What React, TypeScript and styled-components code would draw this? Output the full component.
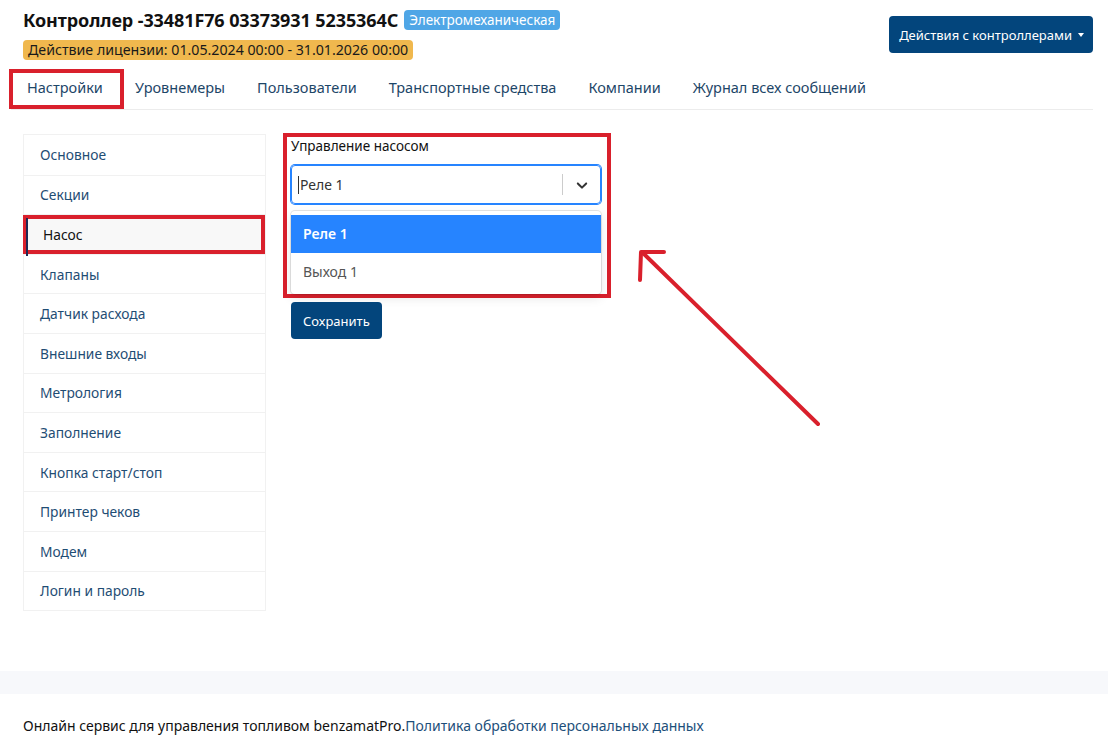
import React from 'react'
import styled, { createGlobalStyle, css } from 'styled-components'

const GlobalStyle = createGlobalStyle`
  * { box-sizing: border-box; }
  body {
    margin: 0;
    font-family: "Noto Sans", "Open Sans", sans-serif;
    color: #212529;
    background: #fff;
  }
`

const RED = '#d9202c'
const NAVY = '#03457c'

const marked = css`
  box-shadow: inset 0 0 0 4px ${RED};
`

const Page = styled.div`
  position: relative;
  width: 1108px;
  min-height: 747px;
`
const Main = styled.div`
  padding: 8px 15px 0 23px;
`
const Header = styled.div`
  display: flex;
  justify-content: space-between;
  align-items: flex-start;
`
const TitleBlock = styled.div`
  display: flex;
  flex-direction: column;
  align-items: flex-start;
  gap: 8px;
`
const TitleRow = styled.div`
  display: flex;
  align-items: center;
  gap: 6px;
`
const Title = styled.h1`
  margin: 0;
  font-size: 18px;
  font-weight: 700;
  letter-spacing: -0.1px;
  color: #111;
  line-height: 24px;
`
const Badge = styled.span<{ $bg: string; $fg: string; $size: number }>`
  display: inline-block;
  background: ${(p) => p.$bg};
  color: ${(p) => p.$fg};
  font-size: ${(p) => p.$size}px;
  line-height: 20px;
  padding: 0 5px;
  border-radius: 4px;
  white-space: nowrap;
`
const ActionsButton = styled.button`
  margin-top: 8px;
  display: flex;
  align-items: center;
  gap: 4px;
  height: 37px;
  padding: 0 9px 0 10px;
  background: ${NAVY};
  color: #fff;
  border: none;
  border-radius: 4px;
  font-family: inherit;
  font-size: 13px;
  font-weight: 400;
  &::after {
    content: '';
    border-top: 4px solid #fff;
    border-left: 3.5px solid transparent;
    border-right: 3.5px solid transparent;
    margin-left: 2px;
  }
`
const Tabs = styled.nav`
  display: flex;
  margin: 9px 0 0 -12px;
  border-bottom: 1px solid #ececec;
`
const Tab = styled.div<{ $marked?: boolean }>`
  position: relative;
  height: 40px;
  display: flex;
  align-items: center;
  padding: 0 16px 4px;
  font-size: 14.5px;
  color: #1d4668;
  ${(p) =>
    p.$marked &&
    css`
      &::after {
        content: '';
        position: absolute;
        left: -2px;
        right: -5px;
        top: 0;
        bottom: 0;
        border: 4px solid ${RED};
      }
    `}
`
const Body = styled.div`
  display: flex;
  align-items: flex-start;
  gap: 17px;
  margin-top: 24px;
`
const SideNav = styled.ul`
  list-style: none;
  margin: 0;
  padding: 0;
  width: 243px;
  border: 1px solid #f1f1f1;
`
const NavItem = styled.li<{ $active?: boolean }>`
  height: 39.6px;
  display: flex;
  align-items: center;
  padding-left: 16px;
  font-size: 13.8px;
  color: #1f4d74;
  border-top: 1px solid #f1f1f1;
  &:first-child { border-top: none; }
  ${(p) =>
    p.$active &&
    css`
      position: relative;
      margin-left: -1px;
      padding-left: 20px;
      background: #f8f8f8;
      color: #111;
      ${marked};
      &::before {
        content: '';
        position: absolute;
        left: 3px;
        top: 3px;
        bottom: -2px;
        width: 2px;
        background: #1d2a55;
      }
    `}
`
const Content = styled.div`
  display: flex;
  flex-direction: column;
  align-items: flex-start;
  gap: 4px;
  margin-top: -1px;
`
const MarkedBox = styled.div`
  width: 328px;
  padding: 5px 10px 4px 8px;
  ${marked};
`
const Label = styled.div`
  font-size: 13.5px;
  color: #111;
  line-height: 17px;
  margin-bottom: 10px;
`
const Control = styled.div`
  height: 39px;
  display: flex;
  align-items: center;
  border: 1px solid #2684ff;
  box-shadow: 0 0 0 1px #2684ff;
  border-radius: 4px;
`
const Value = styled.div`
  flex: 1;
  padding-left: 6px;
  font-size: 14px;
  color: #333;
  display: flex;
  align-items: center;
  &::before {
    content: '';
    width: 1px;
    height: 18px;
    background: #333;
    margin-right: 1px;
  }
`
const Separator = styled.span`
  width: 1px;
  height: 21px;
  background: #ccc;
`
const Indicator = styled.span`
  width: 37px;
  display: flex;
  justify-content: center;
  color: #333;
`
const Menu = styled.div`
  margin-top: 7px;
  padding: 4px 0;
  border-radius: 4px;
  box-shadow: 0 0 0 1px rgba(0, 0, 0, 0.1), 0 4px 11px rgba(0, 0, 0, 0.1);
  background: #fff;
`
const Option = styled.div<{ $selected?: boolean }>`
  height: 37.5px;
  display: flex;
  align-items: center;
  padding-left: 12px;
  font-size: 14px;
  color: ${(p) => (p.$selected ? '#fff' : '#555')};
  background: ${(p) => (p.$selected ? '#2684ff' : 'transparent')};
  font-weight: ${(p) => (p.$selected ? 600 : 400)};
`
const SaveButton = styled.button`
  margin-left: 8px;
  height: 37px;
  padding: 0 12px;
  background: ${NAVY};
  color: #fff;
  border: none;
  border-radius: 4px;
  font-family: inherit;
  font-size: 13px;
`
const FooterBand = styled.div`
  margin-top: 60px;
  height: 23px;
  background: #f7f8fb;
`
const Footer = styled.footer`
  padding: 22px 23px 0;
  font-size: 14px;
  color: #111;
`
const FooterLink = styled.a`
  color: #1d4f7a;
  text-decoration: none;
`
const Annotation = styled.svg`
  position: absolute;
  left: 0;
  top: 0;
  pointer-events: none;
`

const tabs = ['Настройки', 'Уровнемеры', 'Пользователи', 'Транспортные средства', 'Компании', 'Журнал всех сообщений']
const navItems = [
  'Основное',
  'Секции',
  'Насос',
  'Клапаны',
  'Датчик расхода',
  'Внешние входы',
  'Метрология',
  'Заполнение',
  'Кнопка старт/стоп',
  'Принтер чеков',
  'Модем',
  'Логин и пароль',
]

export default function App() {
  return (
    <Page>
      <GlobalStyle />
      <Main>
        <Header>
          <TitleBlock>
            <TitleRow>
              <Title>Контроллер -33481F76 03373931 5235364C</Title>
              <Badge $bg="#4fa6e6" $fg="#fff" $size={13.5}>Электромеханическая</Badge>
            </TitleRow>
            <Badge $bg="#f0b84e" $fg="#1a1a1a" $size={14.2}>Действие лицензии: 01.05.2024 00:00 - 31.01.2026 00:00</Badge>
          </TitleBlock>
          <ActionsButton>Действия с контроллерами</ActionsButton>
        </Header>
        <Tabs>
          {tabs.map((t, i) => (
            <Tab key={t} $marked={i === 0}>{t}</Tab>
          ))}
        </Tabs>
        <Body>
          <SideNav>
            {navItems.map((n) => (
              <NavItem key={n} $active={n === 'Насос'}>{n}</NavItem>
            ))}
          </SideNav>
          <Content>
            <MarkedBox>
              <Label>Управление насосом</Label>
              <Control>
                <Value>Реле 1</Value>
                <Separator />
                <Indicator>
                  <svg width="18" height="18" viewBox="0 0 20 20" fill="currentColor">
                    <path d="M4.516 7.548c.436-.446 1.043-.481 1.576 0L10 11.295l3.908-3.747c.533-.481 1.141-.446 1.574 0 .436.445.408 1.197 0 1.615-.406.418-4.695 4.502-4.695 4.502a1.095 1.095 0 0 1-1.576 0S4.924 9.581 4.516 9.163c-.409-.418-.436-1.170 0-1.615z" />
                  </svg>
                </Indicator>
              </Control>
              <Menu>
                <Option $selected>Реле 1</Option>
                <Option>Выход 1</Option>
              </Menu>
            </MarkedBox>
            <SaveButton>Сохранить</SaveButton>
          </Content>
        </Body>
      </Main>
      <FooterBand />
      <Footer>
        Онлайн сервис для управления топливом benzamatPro.
        <FooterLink href="#">Политика обработки персональных данных</FooterLink>
      </Footer>
      <Annotation width="1108" height="747">
        <g stroke={RED} strokeWidth="4" strokeLinecap="round" strokeLinejoin="round" fill="none">
          <line x1="818" y1="424" x2="643" y2="253" />
          <polyline points="664,252 641,252 640,280" />
        </g>
      </Annotation>
    </Page>
  )
}
